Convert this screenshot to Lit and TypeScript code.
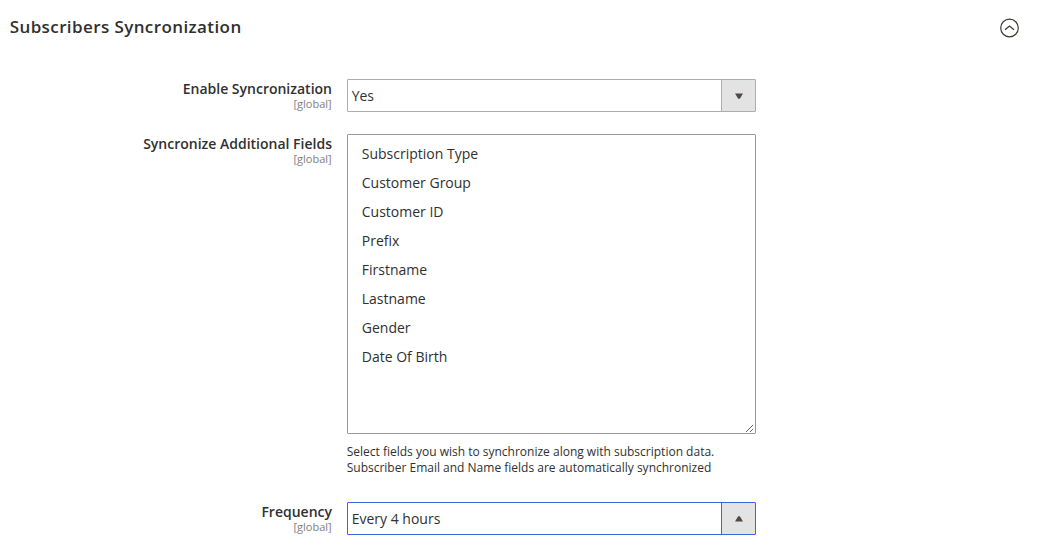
import { LitElement, html, css } from "lit";
import { customElement } from "lit/decorators.js";

const FIELDS = ["Subscription Type", "Customer Group", "Customer ID", "Prefix", "Firstname", "Lastname", "Gender", "Date Of Birth"];

@customElement("app-root")
export class AppRoot extends LitElement {
  static styles = css`
    :host { display: block; box-sizing: border-box; width: 1041px; height: 555px; overflow: hidden; background: #fff; color: #303030; font-family: "Open Sans", sans-serif; font-size: 14px; }
    * { box-sizing: border-box; }
    .head { display: flex; justify-content: space-between; align-items: flex-start; padding: 15px 21px 0 9.7px; height: 39px; }
    .title { margin: 0; font-size: 17px; font-weight: 600; line-height: 23px; letter-spacing: 0.4px; }
    .toggle { display: block; width: 21px; height: 20px; margin-top: 3px; }
    .form { padding-top: 40px; display: flex; flex-direction: column; }
    .row { display: grid; grid-template-columns: 331.7px 409px; column-gap: 15.3px; }
    .row + .row { margin-top: 22px; }
    .row.last { margin-top: 26px; }
    .label { text-align: right; }
    .name { font-weight: 600; line-height: 19px; margin-right: -0.3px; }
    .scope { font-size: 11px; line-height: 12px; color: #808080; }
    .select { display: flex; height: 33px; border: 1px solid #adadad; border-radius: 1px; line-height: 31px; }
    .value { flex: 1; padding-left: 3.7px; }
    .arrow { width: 35px; border-left: 1px solid #adadad; background: #e3e3e3; display: flex; align-items: center; justify-content: center; width: 34px; padding-left: 1px; }
    .focus, .focus .arrow { border-color: #4262e0; }
    .list { height: 300px; border: 1px solid #989898; border-radius: 1px; padding: 5px; display: flex; flex-direction: column; position: relative; }
    .item { height: 29px; line-height: 28px; padding-left: 8.8px; }
    .grip { position: absolute; right: 1px; bottom: 1px; }
    .note { margin: 10px 0 0 -0.3px; font-size: 12px; line-height: 16px; }
  `;
  render() {
    return html`
      <div class="head">
        <h1 class="title">Subscribers Syncronization</h1>
        <svg class="toggle" viewBox="0 0 21 20" fill="none" stroke="#3f3833"><circle cx="10.5" cy="10" r="8.8" stroke-width="1.2"/><path d="M6 11.8 10.5 8.1l4.5 3.7" stroke-width="1.3"/></svg>
      </div>
      <div class="form">
        <div class="row">
          <div class="label"><div class="name">Enable Syncronization</div><div class="scope">[global]</div></div>
          <div class="select"><span class="value">Yes</span><span class="arrow"><svg width="8" height="6"><path d="M0 .5h8L4.8 5.8H3.2z" fill="#514943"/></svg></span></div>
        </div>
        <div class="row">
          <div class="label"><div class="name">Syncronize Additional Fields</div><div class="scope">[global]</div></div>
          <div>
            <div class="list">${FIELDS.map((f) => html`<div class="item">${f}</div>`)}
              <svg class="grip" width="8" height="8" fill="#606060" shape-rendering="crispEdges"><path d="M0 7h1v1H0zM1 6h1v1H1zM2 5h1v1H2zM3 4h1v1H3zM4 3h1v1H4zM5 2h1v1H5zM6 1h1v1H6zM4 7h1v1H4zM5 6h1v1H5zM6 5h1v1H6z"/></svg></div>
            <div class="note">Select fields you wish to synchronize along with subscription data.<br />Subscriber Email and Name fields are automatically synchronized</div>
          </div>
        </div>
        <div class="row last">
          <div class="label"><div class="name">Frequency</div><div class="scope">[global]</div></div>
          <div class="select focus"><span class="value">Every 4 hours</span><span class="arrow"><svg width="8" height="6"><path d="M0 5.5h8L4.8.2H3.2z" fill="#514943"/></svg></span></div>
        </div>
      </div>`;
  }
}
